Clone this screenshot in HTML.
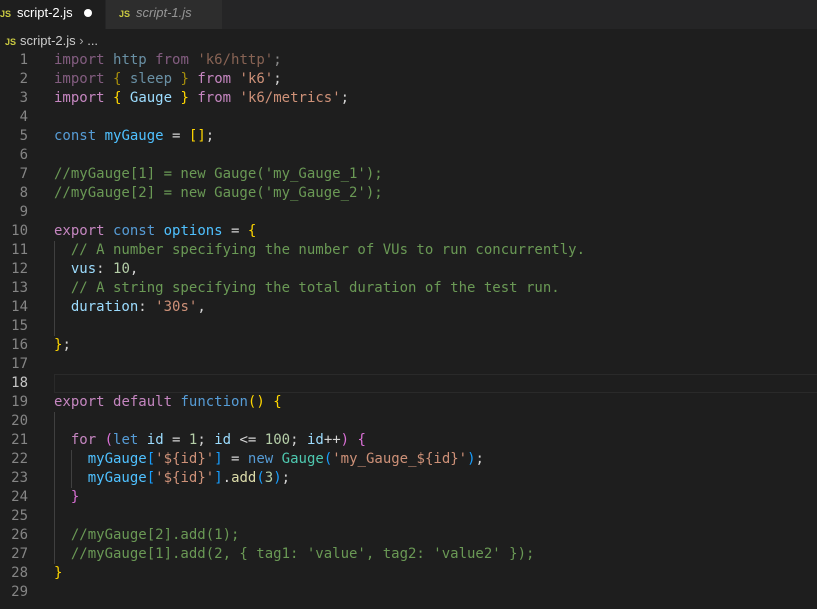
<!DOCTYPE html>
<html><head><style>
body{margin:0;width:817px;height:609px;background:#1e1e1e;overflow:hidden;font-family:"DejaVu Sans Mono","Liberation Mono",monospace;}
.tabs{position:absolute;top:0;left:0;width:817px;height:29px;background:#252526;}
.tab{position:absolute;top:0;height:29px;font-family:"Liberation Sans",sans-serif;font-size:13px;line-height:25px;}
.js{color:#cbcb41;font-weight:bold;font-size:9px;margin-right:6px;}
.bc{position:absolute;top:32px;left:5px;font-family:"Liberation Sans",sans-serif;font-size:13px;color:#ccc;line-height:18px;}
.ln{position:absolute;left:0;width:28px;text-align:right;font-size:14px;color:#858585;}
.code{position:absolute;left:54px;font-size:14px;color:#d4d4d4;}
.l{height:19px;line-height:19px;white-space:pre;}
.k{color:#c586c0}.b{color:#569cd6}.v{color:#9cdcfe}.c4{color:#4fc1ff}.s{color:#ce9178}.c{color:#6a9955}.n{color:#b5cea8}.t{color:#4ec9b0}.f{color:#dcdcaa}.y{color:#ffd700}.p{color:#da70d6}.u{color:#179fff}
.fd{opacity:.6}
.g{position:absolute;width:1px;background:#404040;}
</style></head><body>
<div class="tabs">
 <div class="tab" style="left:0;width:105px;background:#1e1e1e;color:#fff;padding-left:0"><span class="js" style="margin-left:0">JS</span>script-2.js<span style="position:absolute;left:84px;top:9px;width:8px;height:8px;border-radius:50%;background:#fff"></span></div>
 <div class="tab" style="left:105px;width:116px;background:#2d2d2d;color:#969696;border-left:1px solid #252526"><span class="js" style="margin-left:13px">JS</span><i>script-1.js</i></div>
</div>
<div class="bc"><span class="js" style="margin-right:4px">JS</span>script-2.js <span style="color:#aaa">›</span> ...</div>
<div style="position:absolute;left:54px;top:374px;width:763px;height:17px;border:1px solid #2a2a2a"></div>
<div class="g" style="left:54px;top:241px;height:95px"></div>
<div class="g" style="left:54px;top:412px;height:152px"></div>
<div class="g" style="left:71px;top:450px;height:38px"></div>
<div class="ln" style="top:51px"><div class="l">1</div><div class="l">2</div><div class="l">3</div><div class="l">4</div><div class="l">5</div><div class="l">6</div><div class="l">7</div><div class="l">8</div><div class="l">9</div><div class="l">10</div><div class="l">11</div><div class="l">12</div><div class="l">13</div><div class="l">14</div><div class="l">15</div><div class="l">16</div><div class="l">17</div><div class="l" style="color:#c6c6c6">18</div><div class="l">19</div><div class="l">20</div><div class="l">21</div><div class="l">22</div><div class="l">23</div><div class="l">24</div><div class="l">25</div><div class="l">26</div><div class="l">27</div><div class="l">28</div><div class="l">29</div></div>
<div class="code" style="top:51px">
<div class="l fd"><span class="k">import</span> <span class="v">http</span> <span class="k">from</span> <span class="s">'k6/http'</span>;</div>
<div class="l"><span class="k fd">import</span> <span class="fd"><span class="y">{</span> <span class="v">sleep</span> <span class="y">}</span></span> <span class="k">from</span> <span class="s">'k6'</span>;</div>
<div class="l"><span class="k">import</span> <span class="y">{</span> <span class="v">Gauge</span> <span class="y">}</span> <span class="k">from</span> <span class="s">'k6/metrics'</span>;</div>
<div class="l"> </div>
<div class="l"><span class="b">const</span> <span class="c4">myGauge</span> = <span class="y">[]</span>;</div>
<div class="l"> </div>
<div class="l c">//myGauge[1] = new Gauge('my_Gauge_1');</div>
<div class="l c">//myGauge[2] = new Gauge('my_Gauge_2');</div>
<div class="l"> </div>
<div class="l"><span class="k">export</span> <span class="b">const</span> <span class="c4">options</span> = <span class="y">{</span></div>
<div class="l c">  // A number specifying the number of VUs to run concurrently.</div>
<div class="l">  <span class="v">vus</span>: <span class="n">10</span>,</div>
<div class="l c">  // A string specifying the total duration of the test run.</div>
<div class="l">  <span class="v">duration</span>: <span class="s">'30s'</span>,</div>
<div class="l"> </div>
<div class="l"><span class="y">}</span>;</div>
<div class="l"> </div>
<div class="l"> </div>
<div class="l"><span class="k">export</span> <span class="k">default</span> <span class="b">function</span><span class="y">()</span> <span class="y">{</span></div>
<div class="l"> </div>
<div class="l">  <span class="k">for</span> <span class="p">(</span><span class="b">let</span> <span class="v">id</span> = <span class="n">1</span>; <span class="v">id</span> &lt;= <span class="n">100</span>; <span class="v">id</span>++<span class="p">)</span> <span class="p">{</span></div>
<div class="l">    <span class="c4">myGauge</span><span class="u">[</span><span class="s">'${id}'</span><span class="u">]</span> = <span class="b">new</span> <span class="t">Gauge</span><span class="u">(</span><span class="s">'my_Gauge_${id}'</span><span class="u">)</span>;</div>
<div class="l">    <span class="c4">myGauge</span><span class="u">[</span><span class="s">'${id}'</span><span class="u">]</span>.<span class="f">add</span><span class="u">(</span><span class="n">3</span><span class="u">)</span>;</div>
<div class="l">  <span class="p">}</span></div>
<div class="l"> </div>
<div class="l c">  //myGauge[2].add(1);</div>
<div class="l c">  //myGauge[1].add(2, { tag1: 'value', tag2: 'value2' });</div>
<div class="l"><span class="y">}</span></div>
<div class="l"> </div>
</div>
</body></html>
